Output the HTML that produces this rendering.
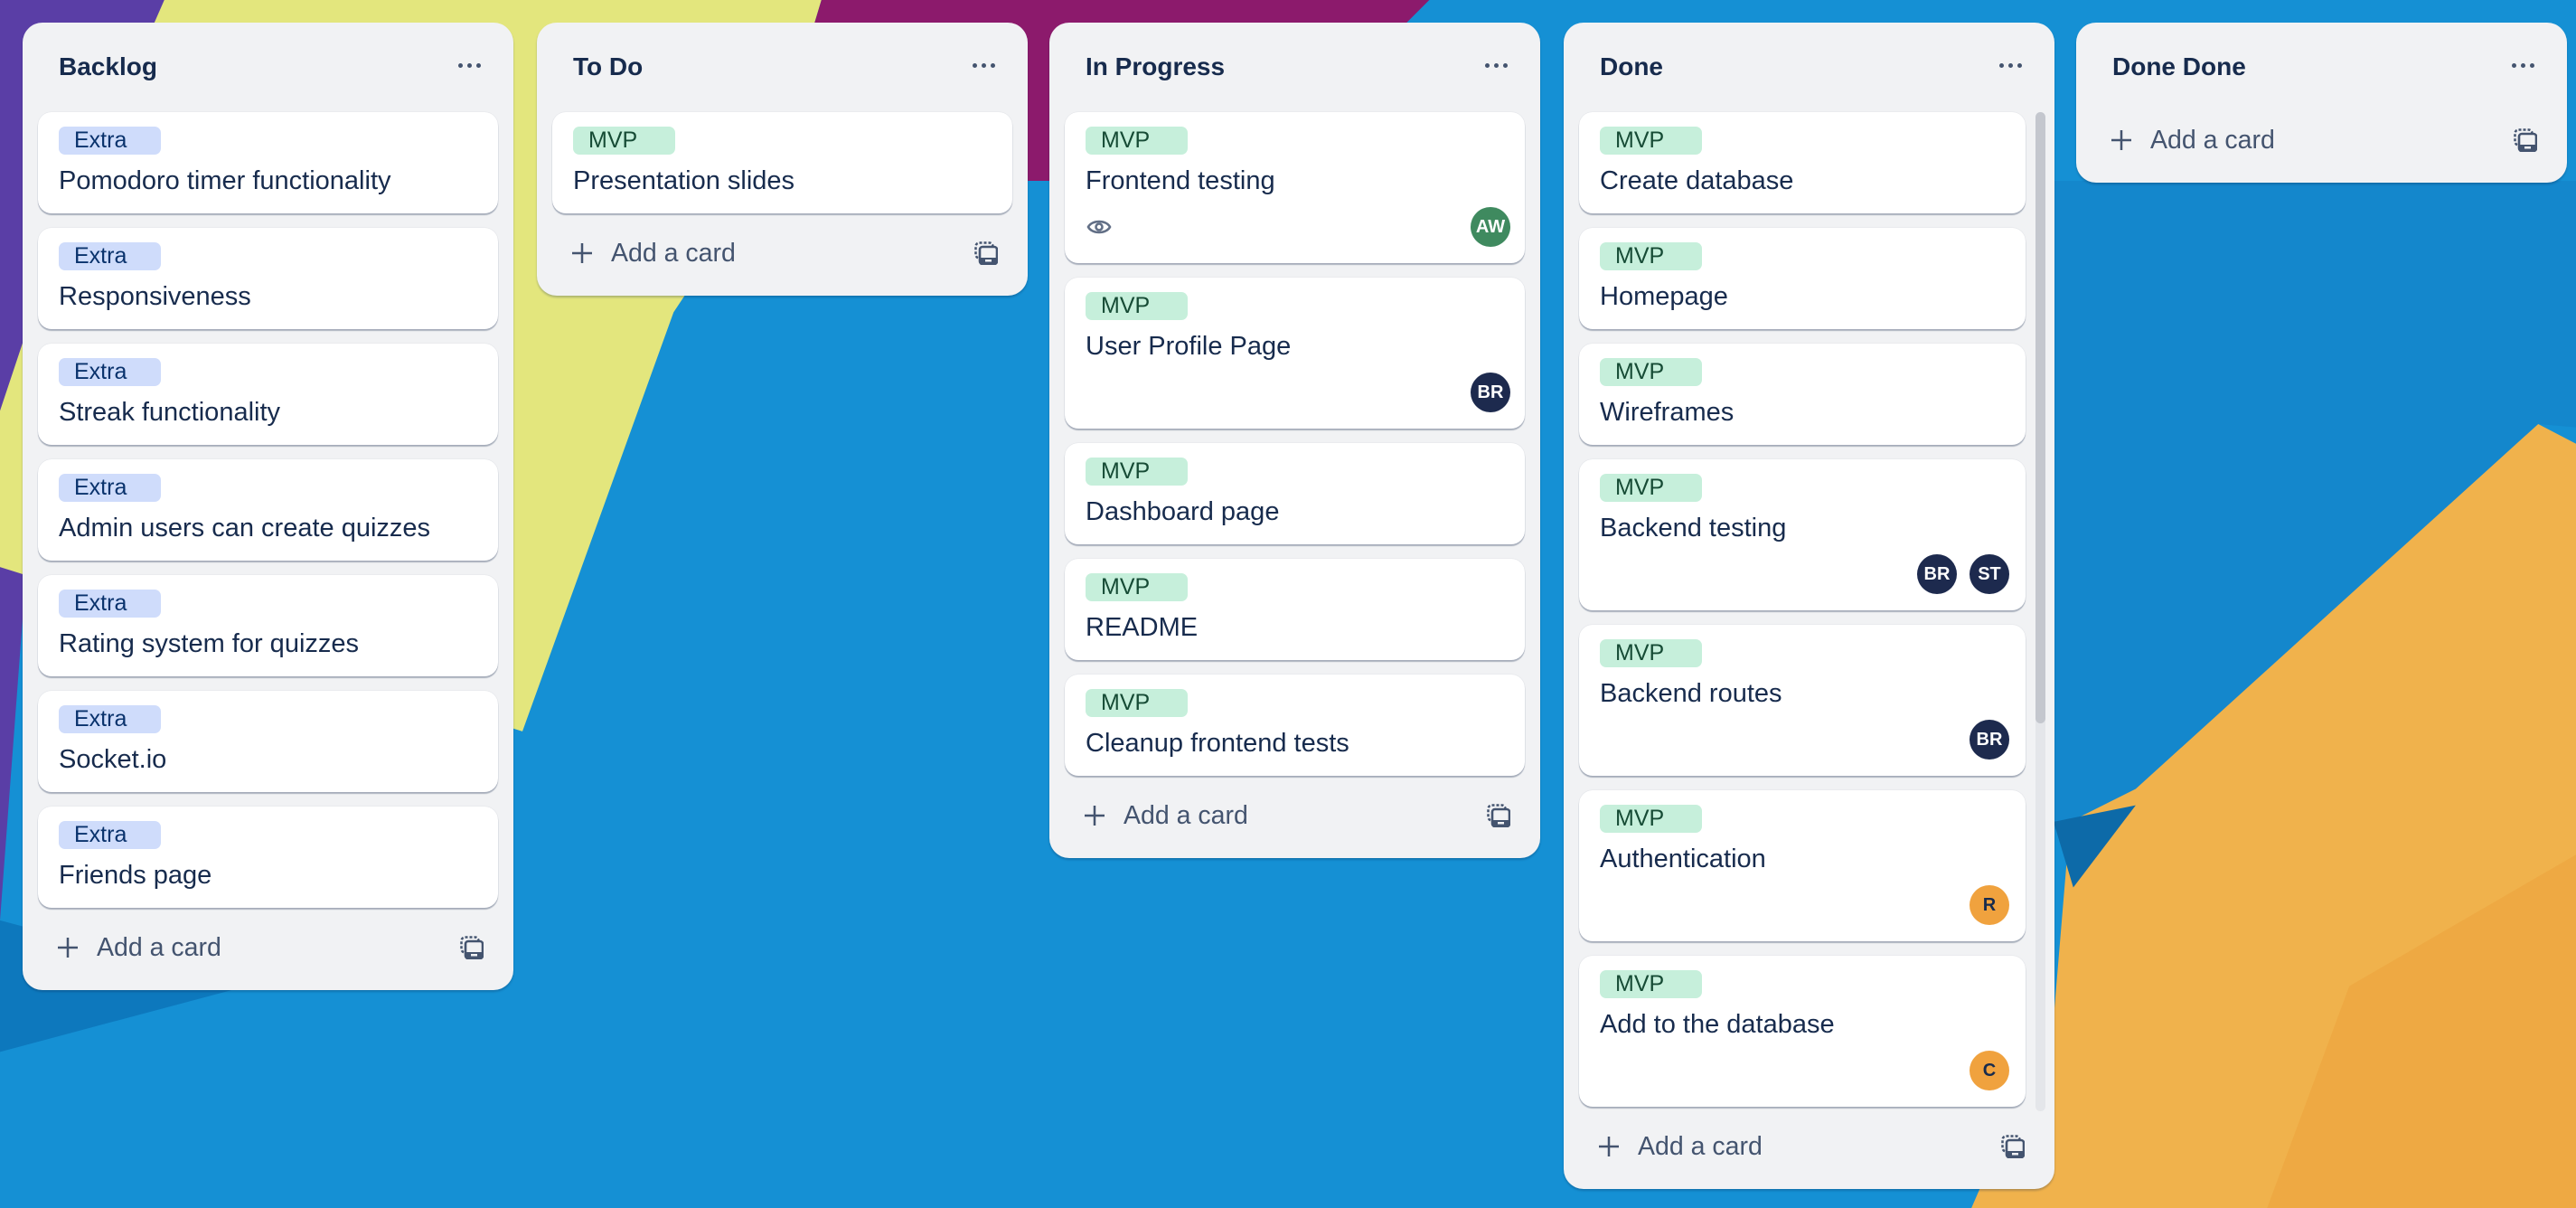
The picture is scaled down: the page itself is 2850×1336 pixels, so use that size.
<!DOCTYPE html>
<html><head><meta charset="utf-8">
<style>
*{box-sizing:border-box;margin:0;padding:0}
html,body{width:2850px;height:1336px;overflow:hidden;font-family:"Liberation Sans",Arial,sans-serif;color:#172b4d}
#bg{position:absolute;left:0;top:0;width:2850px;height:1336px}
.list{position:absolute;top:25px;width:543px;background:#f1f2f4;border-radius:22px;padding:0 17px 19px 17px;box-shadow:0 2px 2px rgba(9,30,66,.25)}
.hdr{height:99px;position:relative}
.hdr .t{position:absolute;left:23px;top:49px;transform:translateY(-50%);font-weight:bold;font-size:28px;line-height:36px}
.dots{position:absolute;right:16px;top:45px;width:28px;height:6px}
.dots i{position:absolute;top:0;width:5px;height:5px;border-radius:50%;background:#44546f}
.card{background:#fff;border-radius:15px;box-shadow:0 2px 1px rgba(9,30,66,.3),0 0 1px rgba(9,30,66,.2);padding:16px 23px 18px;margin-bottom:16px;position:relative}
.lbl{display:inline-block;height:31px;width:113px;border-radius:7px;font-size:25px;line-height:31px;padding-left:17px;margin-bottom:11px}
.ex{background:#cfdcfb;color:#09326c}
.mvp{background:#c6efdb;color:#164b35}
.ttl{font-size:29px;line-height:36px}
.row{height:44px;margin-top:11px;position:relative}
.av{position:absolute;top:0;width:44px;height:44px;border-radius:50%;color:#fff;font-size:20px;font-weight:bold;text-align:center;line-height:44px}
.add{height:56px;position:relative;margin-top:3px;color:#44546f}
.add .p{position:absolute;left:20px;top:15px;width:26px;height:26px}
.add .s{position:absolute;left:65px;top:0;line-height:56px;font-size:28.5px}
.add svg.tm{position:absolute;right:16px;top:15px}
</style></head><body>
<svg id="bg" viewBox="0 0 1568 735" preserveAspectRatio="none">
<rect width="1568" height="735" fill="#1590d4"/>
<polygon points="0,0 110,0 30,160 0,560" fill="#5a3ea6"/>
<polygon points="100,0 500,0 470,100 410,190 318,445 0,345 0,250 30,160" fill="#e3e67d"/>
<polygon points="500,0 870,0 850,20 640,110 626,110 470,100" fill="#8c1a6c"/>
<polygon points="0,560 150,600 0,640" fill="#0d78bd"/>
<polygon points="1250,110 1568,110 1568,260 1545,258 1310,490 1250,505" fill="#1487cc"/>
<polygon points="1300,480 1545,258 1568,270 1568,735 1200,735 1250,620 1260,500" fill="#f0b24c"/>
<polygon points="1430,600 1568,520 1568,735 1380,735" fill="#eea943"/>
<polygon points="1250,500 1300,490 1262,540" fill="#0d6aa8"/>
</svg>

<!-- Backlog -->
<div class="list" style="left:25px">
 <div class="hdr"><div class="t">Backlog</div><div class="dots"><i style="left:0"></i><i style="left:10px"></i><i style="left:20px"></i></div></div>
 <div class="card"><span class="lbl ex">Extra</span><div class="ttl">Pomodoro timer functionality</div></div>
 <div class="card"><span class="lbl ex">Extra</span><div class="ttl">Responsiveness</div></div>
 <div class="card"><span class="lbl ex">Extra</span><div class="ttl">Streak functionality</div></div>
 <div class="card"><span class="lbl ex">Extra</span><div class="ttl">Admin users can create quizzes</div></div>
 <div class="card"><span class="lbl ex">Extra</span><div class="ttl">Rating system for quizzes</div></div>
 <div class="card"><span class="lbl ex">Extra</span><div class="ttl">Socket.io</div></div>
 <div class="card"><span class="lbl ex">Extra</span><div class="ttl">Friends page</div></div>
 <div class="add"><svg class="p" viewBox="0 0 26 26"><path d="M13 2v22M2 13h22" stroke="#44546f" stroke-width="2.5"/></svg><span class="s">Add a card</span><svg class="tm" width="26" height="26" viewBox="0 0 26 26"><rect x="1.5" y="1.5" width="19" height="17" rx="4" fill="none" stroke="#44546f" stroke-width="2.5" stroke-dasharray="3 2"/><rect x="6" y="6" width="19" height="19" rx="3" fill="#f1f2f4" stroke="#44546f" stroke-width="2.6"/><rect x="6" y="18" width="19" height="7" fill="#44546f"/><rect x="12" y="20" width="7" height="2.5" fill="#f1f2f4"/></svg></div>
</div>

<!-- To Do -->
<div class="list" style="left:594px">
 <div class="hdr"><div class="t">To Do</div><div class="dots"><i style="left:0"></i><i style="left:10px"></i><i style="left:20px"></i></div></div>
 <div class="card"><span class="lbl mvp">MVP</span><div class="ttl">Presentation slides</div></div>
 <div class="add"><svg class="p" viewBox="0 0 26 26"><path d="M13 2v22M2 13h22" stroke="#44546f" stroke-width="2.5"/></svg><span class="s">Add a card</span><svg class="tm" width="26" height="26" viewBox="0 0 26 26"><rect x="1.5" y="1.5" width="19" height="17" rx="4" fill="none" stroke="#44546f" stroke-width="2.5" stroke-dasharray="3 2"/><rect x="6" y="6" width="19" height="19" rx="3" fill="#f1f2f4" stroke="#44546f" stroke-width="2.6"/><rect x="6" y="18" width="19" height="7" fill="#44546f"/><rect x="12" y="20" width="7" height="2.5" fill="#f1f2f4"/></svg></div>
</div>

<!-- In Progress -->
<div class="list" style="left:1161px">
 <div class="hdr"><div class="t">In Progress</div><div class="dots"><i style="left:0"></i><i style="left:10px"></i><i style="left:20px"></i></div></div>
 <div class="card"><span class="lbl mvp">MVP</span><div class="ttl">Frontend testing</div>
  <div class="row"><svg style="position:absolute;left:1px;top:10px" width="28" height="24" viewBox="0 0 28 24"><path d="M2 12C6 4 22 4 26 12C22 20 6 20 2 12Z" fill="none" stroke="#626f86" stroke-width="2.6"/><circle cx="14" cy="12" r="3.5" fill="none" stroke="#626f86" stroke-width="2.6"/></svg><div class="av" style="right:-7px;background:#3f8a5f">AW</div></div></div>
 <div class="card"><span class="lbl mvp">MVP</span><div class="ttl">User Profile Page</div><div class="row"><div class="av" style="right:-7px;background:#1d2a4e">BR</div></div></div>
 <div class="card"><span class="lbl mvp">MVP</span><div class="ttl">Dashboard page</div></div>
 <div class="card"><span class="lbl mvp">MVP</span><div class="ttl">README</div></div>
 <div class="card"><span class="lbl mvp">MVP</span><div class="ttl">Cleanup frontend tests</div></div>
 <div class="add"><svg class="p" viewBox="0 0 26 26"><path d="M13 2v22M2 13h22" stroke="#44546f" stroke-width="2.5"/></svg><span class="s">Add a card</span><svg class="tm" width="26" height="26" viewBox="0 0 26 26"><rect x="1.5" y="1.5" width="19" height="17" rx="4" fill="none" stroke="#44546f" stroke-width="2.5" stroke-dasharray="3 2"/><rect x="6" y="6" width="19" height="19" rx="3" fill="#f1f2f4" stroke="#44546f" stroke-width="2.6"/><rect x="6" y="18" width="19" height="7" fill="#44546f"/><rect x="12" y="20" width="7" height="2.5" fill="#f1f2f4"/></svg></div>
</div>

<!-- Done -->
<div class="list" style="left:1730px">
 <div class="hdr"><div class="t">Done</div><div class="dots"><i style="left:0"></i><i style="left:10px"></i><i style="left:20px"></i></div></div>
 <div style="position:absolute;left:522px;top:99px;width:11px;height:1105px;background:#e4e6ea;border-radius:6px"><div style="width:11px;height:676px;background:#c4c7ce;border-radius:6px"></div></div>
 <div style="width:494px">
 <div class="card"><span class="lbl mvp">MVP</span><div class="ttl">Create database</div></div>
 <div class="card"><span class="lbl mvp">MVP</span><div class="ttl">Homepage</div></div>
 <div class="card"><span class="lbl mvp">MVP</span><div class="ttl">Wireframes</div></div>
 <div class="card"><span class="lbl mvp">MVP</span><div class="ttl">Backend testing</div><div class="row"><div class="av" style="right:53px;background:#1d2a4e">BR</div><div class="av" style="right:-5px;background:#1d2a4e">ST</div></div></div>
 <div class="card"><span class="lbl mvp">MVP</span><div class="ttl">Backend routes</div><div class="row"><div class="av" style="right:-5px;background:#1d2a4e">BR</div></div></div>
 <div class="card"><span class="lbl mvp">MVP</span><div class="ttl">Authentication</div><div class="row"><div class="av" style="right:-5px;background:#f0a23e;color:#172b4d">R</div></div></div>
 <div class="card"><span class="lbl mvp">MVP</span><div class="ttl">Add to the database</div><div class="row"><div class="av" style="right:-5px;background:#f0a23e;color:#172b4d">C</div></div></div>
 </div>
 <div class="add"><svg class="p" viewBox="0 0 26 26"><path d="M13 2v22M2 13h22" stroke="#44546f" stroke-width="2.5"/></svg><span class="s">Add a card</span><svg class="tm" width="26" height="26" viewBox="0 0 26 26"><rect x="1.5" y="1.5" width="19" height="17" rx="4" fill="none" stroke="#44546f" stroke-width="2.5" stroke-dasharray="3 2"/><rect x="6" y="6" width="19" height="19" rx="3" fill="#f1f2f4" stroke="#44546f" stroke-width="2.6"/><rect x="6" y="18" width="19" height="7" fill="#44546f"/><rect x="12" y="20" width="7" height="2.5" fill="#f1f2f4"/></svg></div>
</div>

<!-- Done Done -->
<div class="list" style="left:2297px">
 <div class="hdr" style="height:102px"><div class="t">Done Done</div><div class="dots"><i style="left:0"></i><i style="left:10px"></i><i style="left:20px"></i></div></div>
 <div class="add" style="margin-top:0"><svg class="p" viewBox="0 0 26 26"><path d="M13 2v22M2 13h22" stroke="#44546f" stroke-width="2.5"/></svg><span class="s">Add a card</span><svg class="tm" width="26" height="26" viewBox="0 0 26 26"><rect x="1.5" y="1.5" width="19" height="17" rx="4" fill="none" stroke="#44546f" stroke-width="2.5" stroke-dasharray="3 2"/><rect x="6" y="6" width="19" height="19" rx="3" fill="#f1f2f4" stroke="#44546f" stroke-width="2.6"/><rect x="6" y="18" width="19" height="7" fill="#44546f"/><rect x="12" y="20" width="7" height="2.5" fill="#f1f2f4"/></svg></div>
</div>
</body></html>
